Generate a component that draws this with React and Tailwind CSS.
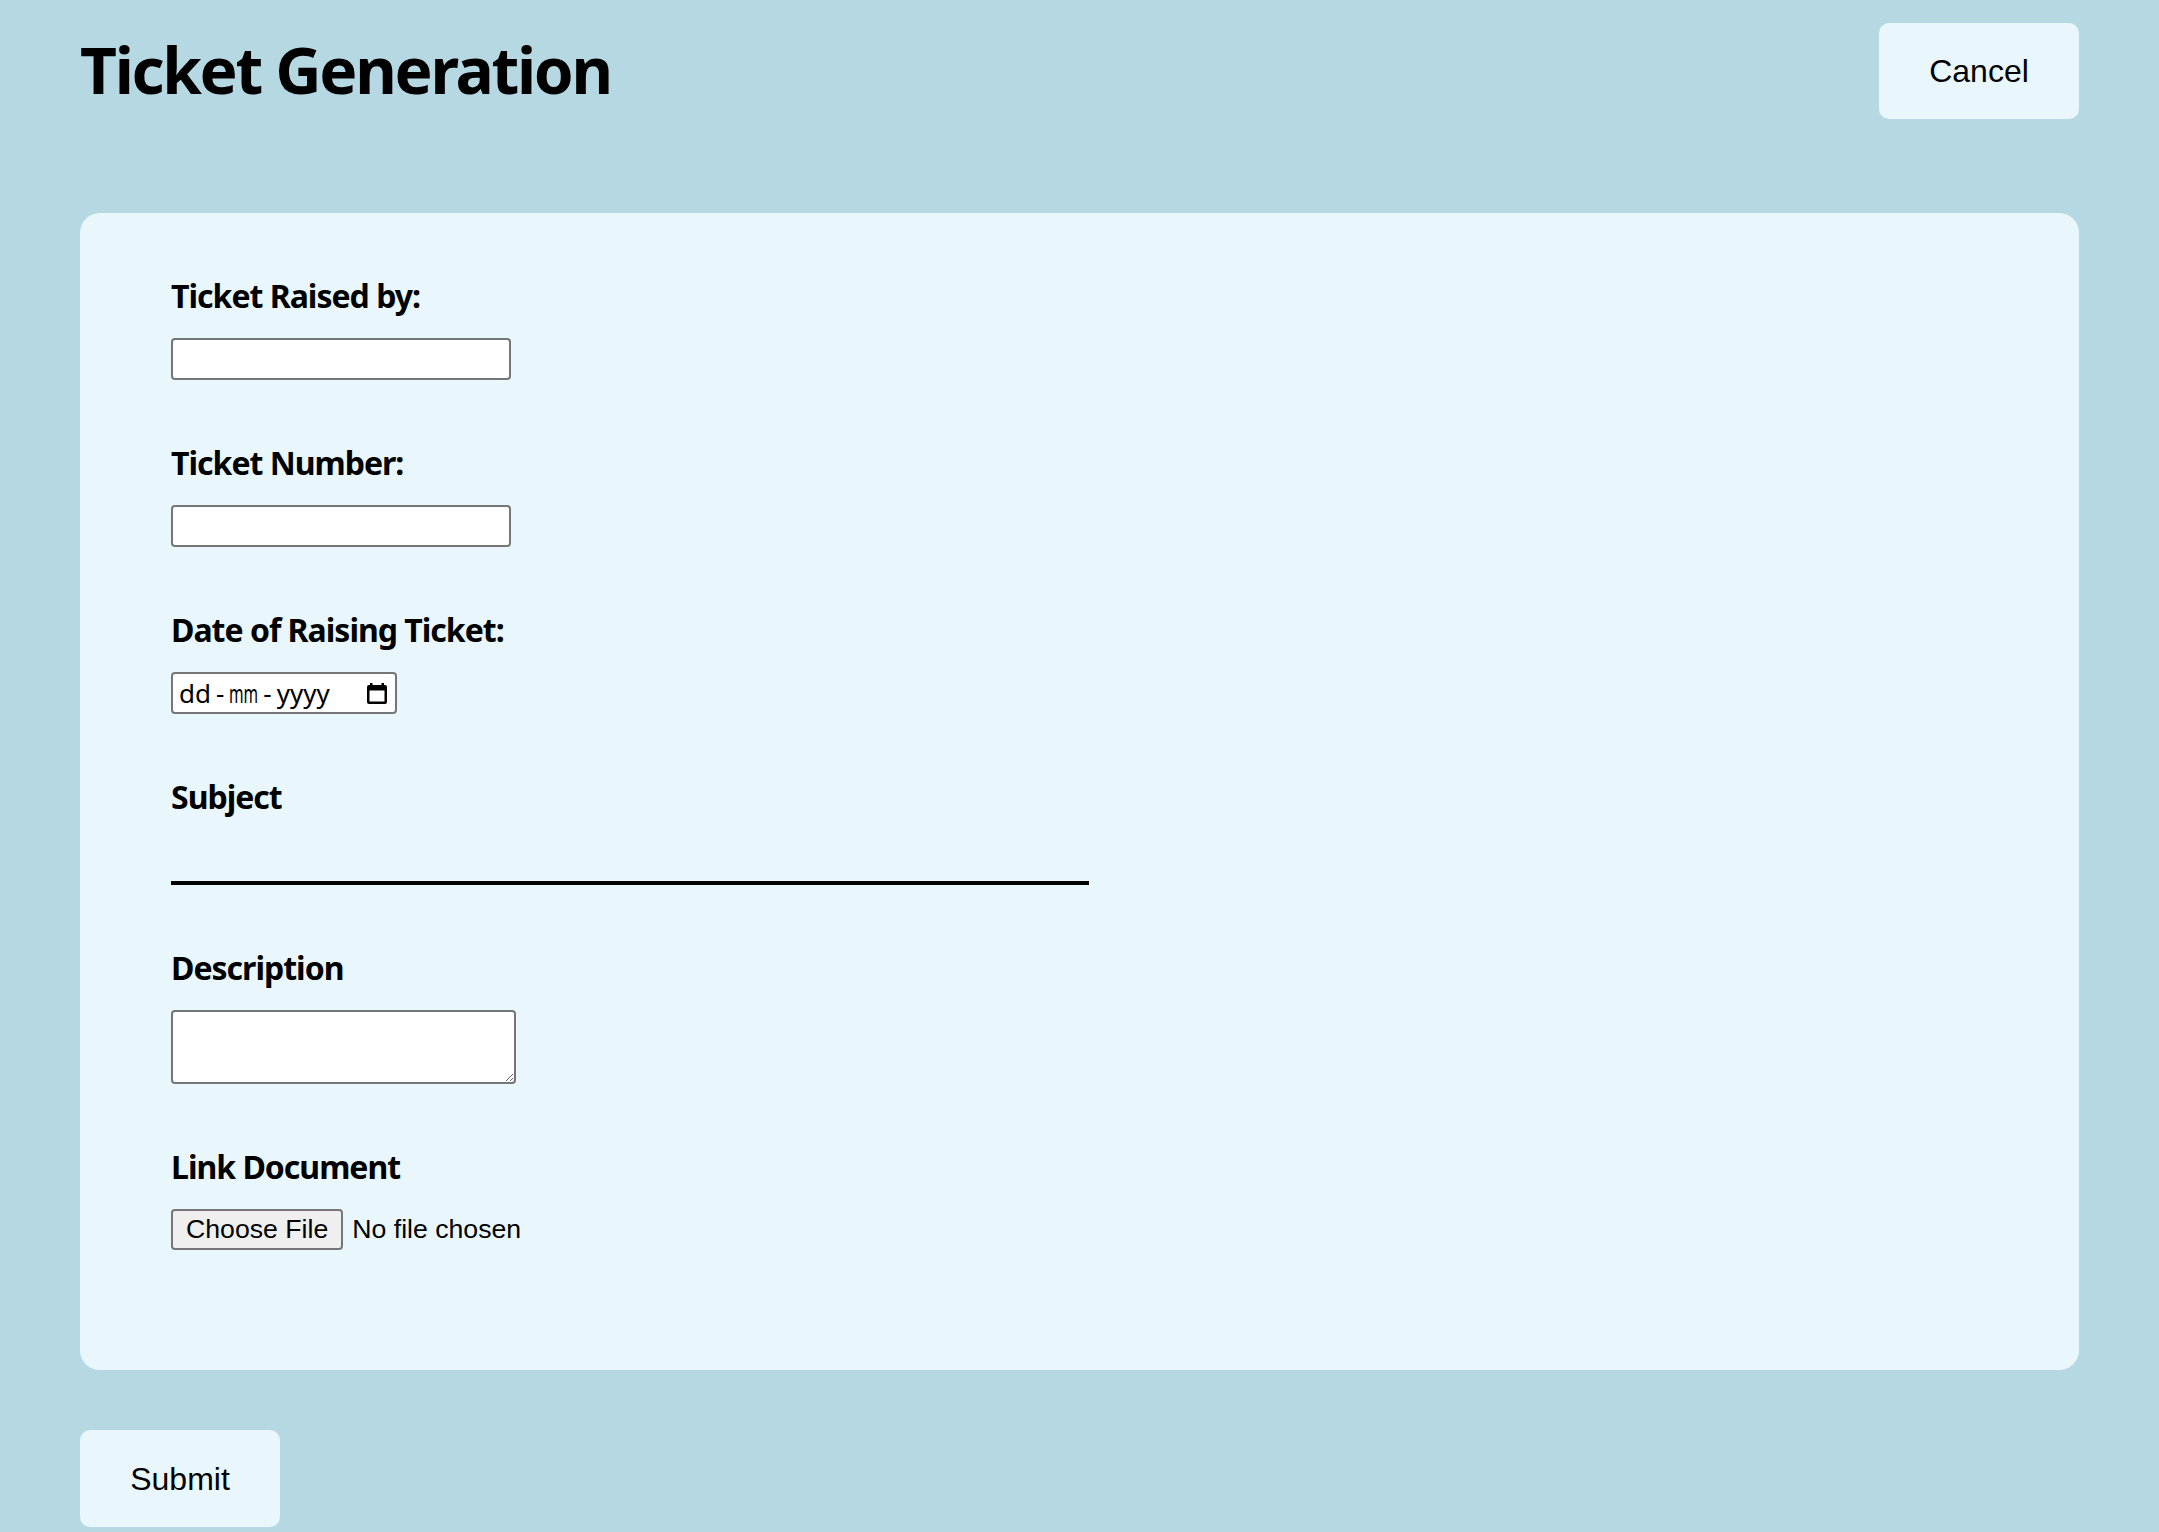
import React from 'react';

// Calendar glyph drawn like the browser's date picker indicator
const CalendarIcon = () => (
  <svg viewBox="0 0 20 21" className="w-[20px] h-[21px]" fill="currentColor">
    <path fillRule="evenodd" d="M2 2h16a2 2 0 0 1 2 2v15a2 2 0 0 1-2 2H2a2 2 0 0 1-2-2V4a2 2 0 0 1 2-2zM2.5 7.5v11h15v-11z" />
    <path d="M3 0h2.5v3H3zM14.5 0H17v3h-2.5z" />
  </svg>
);

const labelClass = "block text-[32px] leading-[44px] font-bold tracking-[-1px] text-black mb-[20px]";
const boxClass = "block bg-white border-2 border-[#767676] rounded-[4px] outline-none";

const Field = ({ label, children, first }) => (
  <div className={first ? "" : "mt-[61px]"}>
    <label className={labelClass}>{label}</label>
    {children}
  </div>
);

const App = () => {
  return (
    <div className="min-h-screen bg-[#b6d8e3] px-[80px] pt-[23px] pb-[6px]" style={{ fontFamily: '"Noto Sans", sans-serif' }}>
      {/* Header */}
      <div className="flex items-start justify-between">
        <h1 className="mt-[3px] text-[64px] leading-[88px] font-bold tracking-[-2.3px] text-black">Ticket Generation</h1>
        <button
          type="button"
          className="h-[96px] w-[200px] rounded-[10px] bg-[#e9f7fc] text-[32px] leading-[36px] text-black"
          style={{ fontFamily: '"Liberation Sans", Arial, sans-serif' }}
        >
          Cancel
        </button>
      </div>

      {/* Form card */}
      <div className="mt-[94px] rounded-[20px] bg-[#e9f7fc] pl-[91px] pt-[61px] pb-[120px]">
        <Field label="Ticket Raised by:" first>
          <input type="text" className={`${boxClass} w-[340px] h-[42px] px-[4px] text-[26.67px]`} />
        </Field>

        <Field label="Ticket Number:">
          <input type="text" className={`${boxClass} w-[340px] h-[42px] px-[4px] text-[26.67px]`} />
        </Field>

        <Field label="Date of Raising Ticket:">
          <div className={`${boxClass} w-[226px] h-[42px] flex items-center pl-[6px] pr-[8px] text-[26px] text-black`}>
            <span>dd</span>
            <span className="ml-[5px]">-</span>
            <span className="ml-[5px] inline-block w-[29px]">
              <span className="inline-block origin-left scale-x-[0.6]">mm</span>
            </span>
            <span className="ml-[5px]">-</span>
            <span className="ml-[5px]">yyyy</span>
            <span className="ml-auto flex items-center">
              <CalendarIcon />
            </span>
          </div>
        </Field>

        <Field label="Subject">
          <input type="text" className="block w-[918px] h-[46px] bg-transparent border-b-4 border-black outline-none text-[26.67px]" />
        </Field>

        <Field label="Description">
          <textarea className={`${boxClass} w-[345px] h-[74px] p-[4px] text-[26.67px]`} style={{ resize: 'both' }} />
        </Field>

        <Field label="Link Document">
          <div className="flex items-center text-[26.67px] text-black" style={{ fontFamily: '"Liberation Sans", Arial, sans-serif' }}>
            <button
              type="button"
              className="h-[41px] px-[13px] leading-[31px] bg-[#efefef] border-2 border-[#767676] rounded-[4px] text-black"
            >
              Choose File
            </button>
            <span className="ml-[9px] leading-[31px]">No file chosen</span>
          </div>
        </Field>
      </div>

      {/* Submit */}
      <button
        type="submit"
        className="mt-[60px] h-[97px] w-[200px] rounded-[10px] bg-[#e9f7fc] text-[32px] leading-[36px] text-black"
        style={{ fontFamily: '"Liberation Sans", Arial, sans-serif' }}
      >
        Submit
      </button>
    </div>
  );
};

export default App;
